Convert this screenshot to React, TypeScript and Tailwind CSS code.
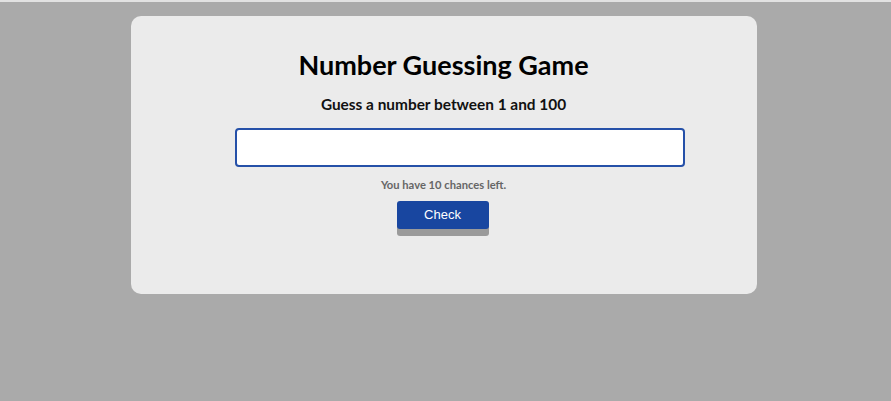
export default function App() {
  return (
    <div className="min-h-[401px] bg-[#aaaaaa] border-t-2 border-[#e2e2e2] pt-[14px]" style={{ fontFamily: '"Lato", "Open Sans", sans-serif' }}>
      <div className="mx-auto w-[626px] h-[278px] rounded-[10px] bg-[#ebebeb] flex flex-col items-center pt-[34px] translate-x-[-2px]">
        <h1 className="text-[27px] leading-[30px] font-bold text-black">Number Guessing Game</h1>
        <p className="mt-[14px] text-[15.4px] leading-[20px] font-bold text-[#111]">Guess a number between 1 and 100</p>
        <input
          type="text"
          className="mt-[14px] ml-[32px] w-[450px] h-[39px] bg-white border-2 border-[#2550a8] rounded-[4px] outline-none px-2"
        />
        <p className="mt-[11px] text-[11.2px] leading-[14px] font-bold text-[#666]">You have 10 chances left.</p>
        <button
          className="mt-[9px] mr-[2px] w-[92px] h-[28px] rounded-[3px] bg-[#1846a0] text-white text-[13px] shadow-[0_7px_0_#9a9a9a]"
          style={{ fontFamily: '"Liberation Sans", Arial, sans-serif' }}
        >
          Check
        </button>
      </div>
    </div>
  );
}
